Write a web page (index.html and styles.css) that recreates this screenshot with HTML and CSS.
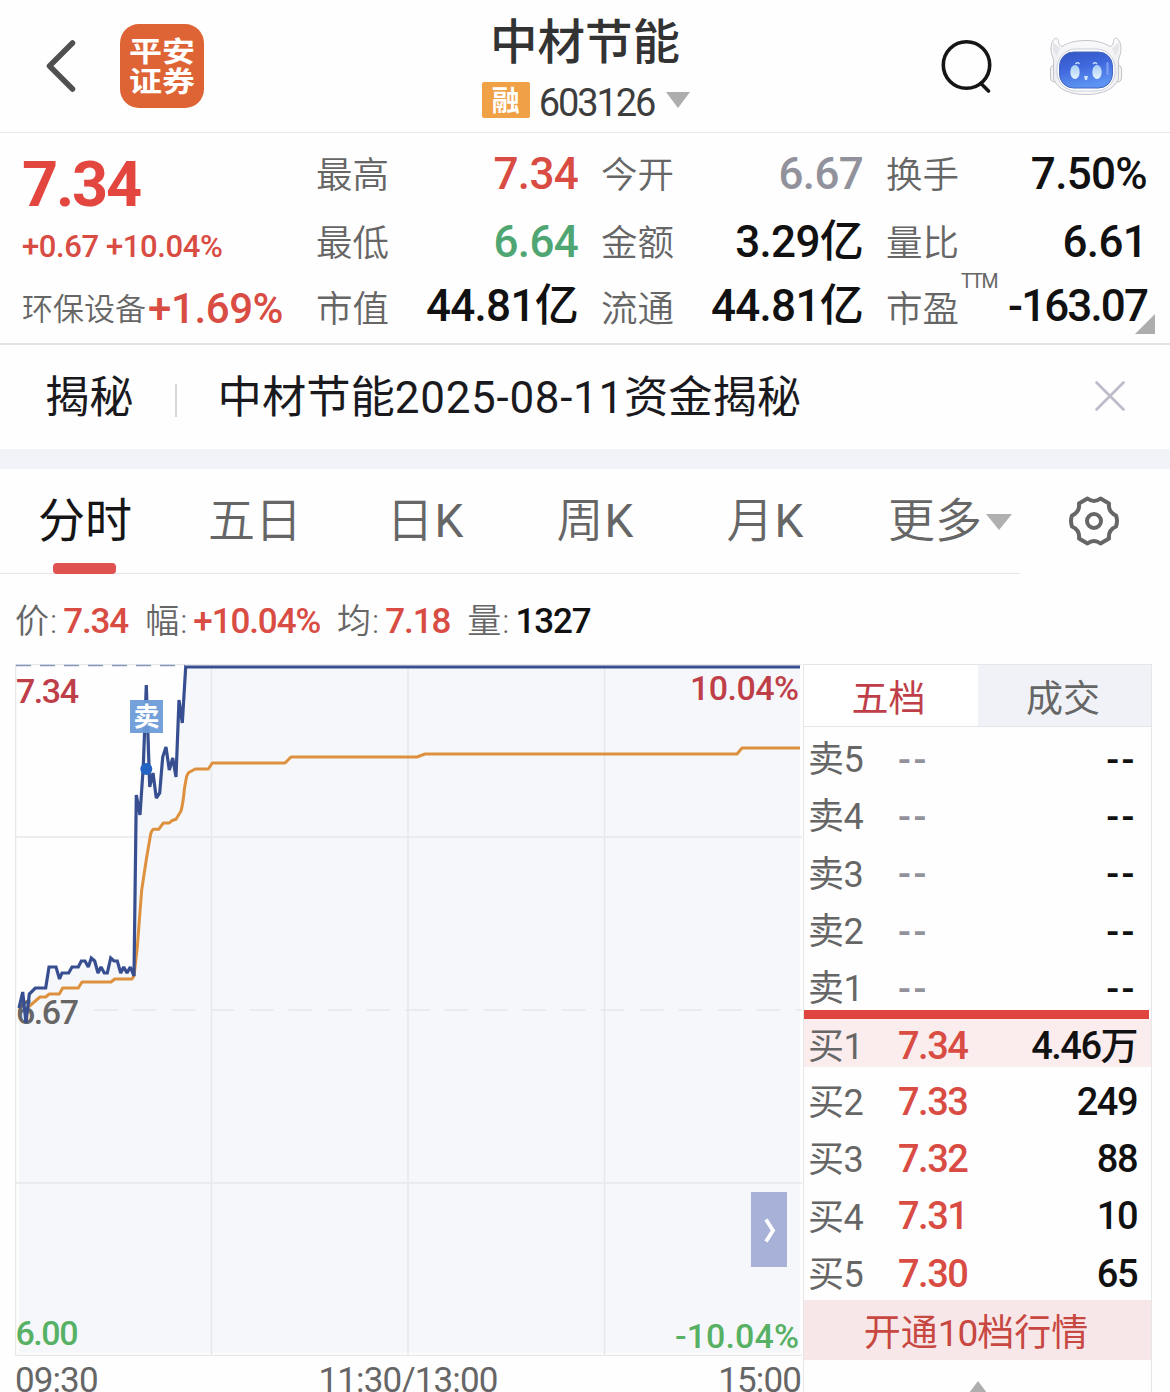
FILE: index.html
```html
<!DOCTYPE html>
<html lang="zh-CN">
<head>
<meta charset="utf-8">
<title>中材节能 603126</title>
<link rel="stylesheet" href="styles.css">
</head>
<body>
<header class="topbar">
  <div class="topbar-left">
    <svg class="back" width="32" height="56" viewBox="0 0 32 56"><path d="M27.500 5 4.500 28 27.500 51" fill="none" stroke="#505050" stroke-width="5.500" stroke-linecap="round" stroke-linejoin="round"/></svg>
    <div class="logo"><div class="logo-text"><span>平安</span><span>证券</span></div></div>
  </div>
  <div class="stock">
    <h1 class="stock-name">中材节能</h1>
    <div class="stock-code"><span class="badge">融</span><span class="code">603126</span><svg width="24" height="16" viewBox="0 0 24 16"><path d="M0 0h24L12 16z" fill="#adadad"/></svg></div>
  </div>
  <div class="topbar-right">
    <svg width="54" height="56" viewBox="0 0 54 56"><circle cx="26.500" cy="27" r="23.200" fill="none" stroke="#151515" stroke-width="3.600"/><path d="M41 45.500 48.500 53" stroke="#151515" stroke-width="3.600" stroke-linecap="round"/></svg>
    <svg class="robot" width="76" height="62" viewBox="0 0 76 62">
      <defs>
        <linearGradient id="face" x1="0" y1="0" x2="0.300" y2="1"><stop offset="0" stop-color="#3156c4"/><stop offset="0.500" stop-color="#4169de"/><stop offset="1" stop-color="#5c93f2"/></linearGradient>
        <linearGradient id="shell" x1="0" y1="0" x2="0" y2="1"><stop offset="0" stop-color="#fafafb"/><stop offset="0.600" stop-color="#ececf0"/><stop offset="1" stop-color="#fafafc"/></linearGradient>
        <linearGradient id="eye" x1="0" y1="0" x2="0" y2="1"><stop offset="0" stop-color="#a9cdf5"/><stop offset="1" stop-color="#e4f3ff"/></linearGradient>
      </defs>
      <rect x="2.500" y="30" width="9" height="17" rx="4" fill="#f7f4f4" stroke="#c6c2c4"/>
      <rect x="64.500" y="30" width="9" height="17" rx="4" fill="#f7f4f4" stroke="#c6c2c4"/>
      <path d="M7 3.500C3 6 2 14 4 20c1 3 2 5 1.500 9V44C10 55 23 59.500 38 59.500S66 55 70.500 44V29c-.5-4 .5-6 1.500-9 2-6 1-14-3-16.500-2-1-3 .5-3.500 3-.5 3-1.500 4.500-3.500 5C55 7 47 5.500 38 5.500S21 7 14 11.500c-2-.5-3-2-3.500-5C10 4 9 2.500 7 3.500z" fill="url(#shell)" stroke="#c3c4c9"/>
      <path d="M5 7c-1 5 0 10 4 14l3-8C9 11 7 9 5 7zm66 0c1 5 0 10-4 14l-3-8c3-2 5-4 7-6z" fill="#e5e6ea"/>
      <rect x="9" y="14" width="58" height="42" rx="19" fill="#fff" stroke="#c9cedd"/>
      <rect x="11.500" y="17" width="53" height="36" rx="14" fill="url(#face)" stroke="#4666bd"/>
      <ellipse cx="27" cy="37" rx="4.700" ry="7" fill="url(#eye)"/>
      <ellipse cx="49" cy="37" rx="4.700" ry="7" fill="url(#eye)"/>
      <path d="M36 41h4l-1 4h-2z" fill="#cde4ff"/>
      <path d="M27.500 29q2-2.500 4 0M45 29q2-2.500 4 0" stroke="#c5dcff" stroke-width="1.300" fill="none"/>
      <path d="M59.500 28v11" stroke="#84a2f4" stroke-width="2" stroke-linecap="round"/>
    </svg>
  </div>
</header>

<section class="quote">
  <div class="last">
    <div class="last-price">7.34</div>
    <div class="last-change">+0.67 +10.04%</div>
    <div class="sector"><span>环保设备</span><b>+1.69%</b></div>
  </div>
  <dl class="stats">
    <div><dt>最高</dt><dd class="up">7.34</dd></div>
    <div><dt>今开</dt><dd class="flat">6.67</dd></div>
    <div><dt>换手</dt><dd>7.50%</dd></div>
    <div><dt>最低</dt><dd class="down">6.64</dd></div>
    <div><dt>金额</dt><dd>3.29亿</dd></div>
    <div><dt>量比</dt><dd>6.61</dd></div>
    <div><dt>市值</dt><dd>44.81亿</dd></div>
    <div><dt>流通</dt><dd>44.81亿</dd></div>
    <div><dt>市盈<sup>TTM</sup></dt><dd class="long">-163.07</dd></div>
  </dl>
  <i class="corner"></i>
</section>

<section class="news">
  <span class="news-tag">揭秘</span><i class="news-sep"></i><span class="news-title">中材节能<span class="date">2025-08-11</span>资金揭秘</span>
  <svg width="32" height="32" viewBox="0 0 32 32"><path d="M2.500 2.500l27 27M29.500 2.500l-27 27" stroke="#bcbcc8" stroke-width="2.700" stroke-linecap="round"/></svg>
</section>

<nav class="tabs">
  <div class="tab-list">
    <span class="tab active">分时</span><span class="tab">五日</span><span class="tab">日<i>K</i></span><span class="tab">周<i>K</i></span><span class="tab">月<i>K</i></span>
    <span class="tab more">更多<svg width="26" height="16" viewBox="0 0 26 16"><path d="M0 0h26L13 16z" fill="#b0b0b0"/></svg></span>
  </div>
  <svg class="gear" width="54" height="54" viewBox="0 0 54 54" fill="none" stroke="#666" stroke-width="4" stroke-linejoin="round"><path d="M20.500 4.500Q27 9.500 33.500 4.500L42 9.500Q41 18 49 21.500Q51 27 49 32.500Q41 36 42 44.500L33.500 49.500Q27 44.500 20.500 49.500L12 44.500Q13 36 5 32.500Q3 27 5 21.500Q13 18 12 9.500Z"/><circle cx="27" cy="27" r="7"/></svg>
</nav>

<div class="summary">
  <span>价:<b class="up">7.34</b></span><span>幅:<b class="up">+10.04%</b></span><span>均:<b class="up">7.18</b></span><span>量:<b>1327</b></span>
</div>

<main class="board">
  <div class="chart">
    <svg class="plot" width="787" height="692" viewBox="15 664 787 692">
      <path d="M19 1008L22.700 992 26 1023 29.300 994 35.300 988H45.700L49 967H56L59.500 979 62 973H68.700L72 967H78.300L81.300 961H85L88.300 967 91.300 958 94.700 961 98 973 101 967 104.300 973H107.300L110.700 958 114 961H117.300L120.700 973 123.700 967 127 973 130.300 967 134 976 136.300 795 140 815 143.300 766 146.300 685 149.700 787 153 773 156.300 798 159.700 793 162.700 757 166 747 169.300 770 172.700 758 176 777 179 700 182.300 723 185.700 667H800V1353H19Z" fill="#f6f7fa"/>
      <g fill="none" stroke="#e6e8ea" stroke-width="1.500">
        <path d="M15.500 1356V664.500H802"/>
        <path d="M211.500 667V1356M408 667V1356M604.500 667V1356M16 837H802M16 1183H802M16 1355.500H802"/>
        <path d="M93.500 1010H802" stroke-dasharray="24 15"/>
      </g>
      <path d="M16 665.500H185" stroke="#8797bd" stroke-width="1.500" stroke-dasharray="15 9"/>
      <g class="axis">
        <text x="16" y="703" fill="#bf3f49" textLength="63">7.34</text>
        <text x="16" y="1024" fill="#666" textLength="63">6.67</text>
        <text x="15.500" y="1345" fill="#57b164" textLength="63">6.00</text>
        <text x="690" y="700" fill="#bf3f49" textLength="109">10.04%</text>
        <text x="675" y="1348" fill="#57b164" textLength="124">-10.04%</text>
      </g>
      <path d="M26 1009L33 1003 40 997H45.700L49.300 994H59.300L62.700 988H78.300L82 982H111L114.700 979H132L134 976 137.300 947 141.700 890 146.700 857 150.700 834Q152 829.300 154 829.300H158.700L163.300 823H169.300L172 820.500 176 819.300 181 811Q183 804 184.500 788L186.700 776 188.700 772.500 195.300 769H208.300L212.300 763H285L291 757H417L425 754H737L742 748H800" fill="none" stroke="#dd913e" stroke-width="3" stroke-linejoin="round"/>
      <path d="M19 1008L22.700 992 26 1023 29.300 994 35.300 988H45.700L49 967H56L59.500 979 62 973H68.700L72 967H78.300L81.300 961H85L88.300 967 91.300 958 94.700 961 98 973 101 967 104.300 973H107.300L110.700 958 114 961H117.300L120.700 973 123.700 967 127 973 130.300 967 134 976 136.300 795 140 815 143.300 766 146.300 685 149.700 787 153 773 156.300 798 159.700 793 162.700 757 166 747 169.300 770 172.700 758 176 777 179 700 182.300 723 185.700 667H800" fill="none" stroke="#374f91" stroke-width="3.200" stroke-miterlimit="2"/>
      <circle cx="146.300" cy="769" r="6" fill="#2463c4"/>
      <rect x="130" y="700" width="33" height="33" fill="#6c9bd8" fill-opacity=".94"/>
      <text class="sell-mark" x="146.500" y="726" text-anchor="middle">卖</text>
      <rect x="751" y="1192" width="36" height="75" fill="#a8b2d8"/>
      <path d="M766 1219.500L773 1230.500 766 1241.500" fill="none" stroke="#fff" stroke-width="3.800"/>
    </svg>
    <div class="times"><span>09:30</span><span>11:30/13:00</span><span>15:00</span></div>
  </div>
  <aside class="book">
    <div class="book-tabs"><span class="on">五档</span><span>成交</span></div>
    <div class="asks">
      <div class="row"><span>卖5</span><i>--</i><b>--</b></div>
      <div class="row"><span>卖4</span><i>--</i><b>--</b></div>
      <div class="row"><span>卖3</span><i>--</i><b>--</b></div>
      <div class="row"><span>卖2</span><i>--</i><b>--</b></div>
      <div class="row"><span>卖1</span><i>--</i><b>--</b></div>
    </div>
    <div class="divider"></div>
    <div class="bids">
      <div class="row best"><span>买1</span><i>7.34</i><b>4.46万</b></div>
      <div class="row"><span>买2</span><i>7.33</i><b>249</b></div>
      <div class="row"><span>买3</span><i>7.32</i><b>88</b></div>
      <div class="row"><span>买4</span><i>7.31</i><b>10</b></div>
      <div class="row"><span>买5</span><i>7.30</i><b>65</b></div>
    </div>
    <div class="promo">开通<span>10</span>档行情</div>
    <svg class="expand" width="18" height="12" viewBox="0 0 18 12"><path d="M9 0l9 12H0z" fill="#aeaeae"/></svg>
  </aside>
</main>
</body>
</html>
```

FILE: styles.css
```css
* { box-sizing: border-box; margin: 0; padding: 0; }
i { font-style: normal; }
html, body { height: 1392px; overflow: hidden; }
body {
  width: 1170px;
  background: #fefefe;
  color: #666;
  font-family: Roboto, "Noto Sans CJK SC", sans-serif;
  line-height: 1.2;
}
svg { display: block; flex: none; }
.up { color: #d94c43; }

.topbar {
  height: 133px;
  border-bottom: 1px solid #e8e8e8;
  display: grid;
  grid-template-columns: 1fr 240px 1fr;
}
.topbar-left { display: flex; align-items: flex-start; padding: 24px 0 0 45px; gap: 43px; }
.back { margin-top: 14px; }
.logo {
  width: 84px; height: 84px;
  border-radius: 19px;
  background: #de6436;
  color: #fff;
  font: 700 33px/34px "Noto Sans CJK SC", sans-serif;
  display: flex; align-items: center; justify-content: center;
}
.logo-text { display: flex; flex-direction: column; transform: scaleY(.87); margin-top: -2px; }
.stock { display: flex; flex-direction: column; align-items: center; }
.stock-name {
  font: 500 47.500px/62px "Noto Sans CJK SC", sans-serif;
  color: #333;
  margin-top: 8px;
  height: 74px;
}
.stock-code { display: flex; align-items: center; height: 36px; padding-left: 2px; }
.badge {
  width: 48px; height: 36px;
  background: #f0a045;
  border-radius: 2px;
  color: #fff;
  font: 700 28px/34px "Noto Sans CJK SC", sans-serif;
  text-align: center;
}
.code { font-size: 38px; line-height: 36px; letter-spacing: -2.100px; color: #3d3d3d; margin: 6px 12px 0 9px; }
.topbar-right { display: flex; justify-content: flex-end; align-items: flex-start; gap: 54px; padding: 38px 46px 0 0; }
.robot { margin-top: -3px; }

.quote {
  position: relative;
  height: 212px;
  border-bottom: 2px solid #e4e4e4;
  display: flex;
  padding-left: 22px;
}
.last { width: 294px; color: #d94c43; }
.last-price { font-size: 63px; font-weight: 700; line-height: 76px; padding-top: 14px; letter-spacing: -2.200px; color: #e2463e; }
.last-change { font-size: 31px; font-weight: 500; line-height: 40px; margin-top: 4px; letter-spacing: -.400px; white-space: nowrap; }
.sector { display: flex; align-items: center; height: 60px; margin-top: 12px; white-space: nowrap; }
.sector span { font-size: 31px; color: #666; font-weight: 350; padding-top: 2px; }
.sector b { font-size: 42px; font-weight: 500; letter-spacing: -.400px; margin-left: 2px; }
.stats {
  width: 831px;
  padding-top: 6px;
  display: grid;
  grid-template-columns: 262px 262px 261px;
  grid-template-rows: 68px 68px 61px;
  column-gap: 23px;
}
.stats div { display: flex; align-items: center; justify-content: space-between; white-space: nowrap; }
.stats dt { position: relative; font-size: 36.500px; font-weight: 350; padding-top: 5px; }
.stats div:nth-child(n+7) dt { padding-top: 8px; }
.stats dd { font-size: 44px; font-weight: 500; color: #111; letter-spacing: -.700px; padding-top: 2px; }
.stats dd.up { color: #d94c43; }
.stats dd.down { color: #4fa673; }
.stats dd.flat { color: #92929c; }
.stats dd.long { letter-spacing: -1.900px; }
.stats sup { position: absolute; left: 75px; top: -10px; font-size: 19.500px; line-height: 24px; letter-spacing: -1.500px; font-weight: 400; }
.corner { position: absolute; right: 15px; bottom: 9px; border: 10.500px solid; border-color: transparent #adadad #adadad transparent; }

.news {
  height: 124px;
  border-bottom: 20px solid #f2f3f8;
  padding: 0 44px 2px 45px;
  display: flex;
  align-items: center;
  color: #1a1a1e;
  font-size: 44.300px;
}
.news-sep { width: 2px; height: 33px; background: #d6d6d6; margin: 8px 41px 0; }
.news-tag, .news-title { padding-top: 6px; }
.news-title { flex: 1; white-space: nowrap; }
.news .date { font-size: 44px; letter-spacing: .700px; font-weight: 400; }

.tabs { height: 105px; display: flex; align-items: flex-start; }
.tab-list { width: 1020px; height: 105px; border-bottom: 1px solid #e6e6e6; display: grid; grid-template-columns: repeat(6, 170px); }
.tab { display: flex; justify-content: center; align-items: center; font-size: 47px; font-weight: 350; padding-top: 1px; white-space: nowrap; }
.tab i { font-size: 46px; font-weight: 400; padding-left: 1px; }
.tab.active { position: relative; color: #151515; font-weight: 400; }
.tab.active::after { content: ""; position: absolute; left: 53px; bottom: -1px; width: 63px; height: 11px; border-radius: 4px; background: #e05250; }
.tab.more { padding-left: 30px; }
.tab.more svg { margin: 1px 0 0 4px; }
.gear { margin: 25px 0 0 47px; }

.summary { height: 90px; display: flex; align-items: center; padding: 6px 0 0 15px; font-size: 34px; font-weight: 350; white-space: nowrap; letter-spacing: 1px; }
.summary span { margin-right: 17px; }
.summary b { font-size: 35px; font-weight: 500; letter-spacing: -1.100px; margin-left: 5px; color: #111; }
.summary b.up { color: #d94c43; }

.board { display: flex; height: 728px; padding-left: 15px; }
.chart { width: 787px; }
.axis { font: 500 34px Roboto, sans-serif; }
.sell-mark { font: 700 26px "Noto Sans CJK SC", sans-serif; fill: #fff; }
.times { display: flex; justify-content: space-between; height: 36px; font-size: 35px; line-height: 49px; letter-spacing: -.900px; padding-right: 1px; }
.book { width: 349px; margin-left: 1px; border: 1px solid #e6e6e9; border-bottom: 0; height: 728px; }
.book-tabs { display: grid; grid-template-columns: 174px 173px; height: 62px; border-bottom: 1px solid #e6e6e9; font-size: 37px; line-height: 70px; text-align: center; }
.book-tabs span { background: #f1f2f7; padding-right: 3px; height: 61px; }
.book-tabs .on { background: #fff; color: #bf3f49; padding-right: 5px; }
.asks { height: 283px; padding-top: 3px; }
.row { height: 57.250px; padding: 0 14px 0 4px; display: grid; grid-template-columns: 90px 1fr auto; align-items: center; font-size: 36px; white-space: nowrap; }
.row span { font-weight: 400; letter-spacing: -.600px; padding-top: 4px; }
.row i, .row b { font-size: 38px; font-weight: 500; letter-spacing: -1.500px; padding-top: 2px; }
.row b { color: #111; }
.asks .row i { color: #92929c; }
.asks .row i, .asks .row b { letter-spacing: 2.500px; padding-top: 4px; }
.bids .row i { color: #d94c43; }
.divider { height: 9px; background: #e0443e; margin-right: 2px; }
.bids { height: 281px; }
.bids .best { height: 48px; margin-bottom: 6px; padding-top: 3px; background: #fbecee; }
.promo { height: 60px; background: #f8e7e9; color: #c74741; font-size: 37px; line-height: 67px; text-align: center; padding-right: 3px; }
.promo span { letter-spacing: -1px; }
.expand { margin: 21px auto 0; }
```
